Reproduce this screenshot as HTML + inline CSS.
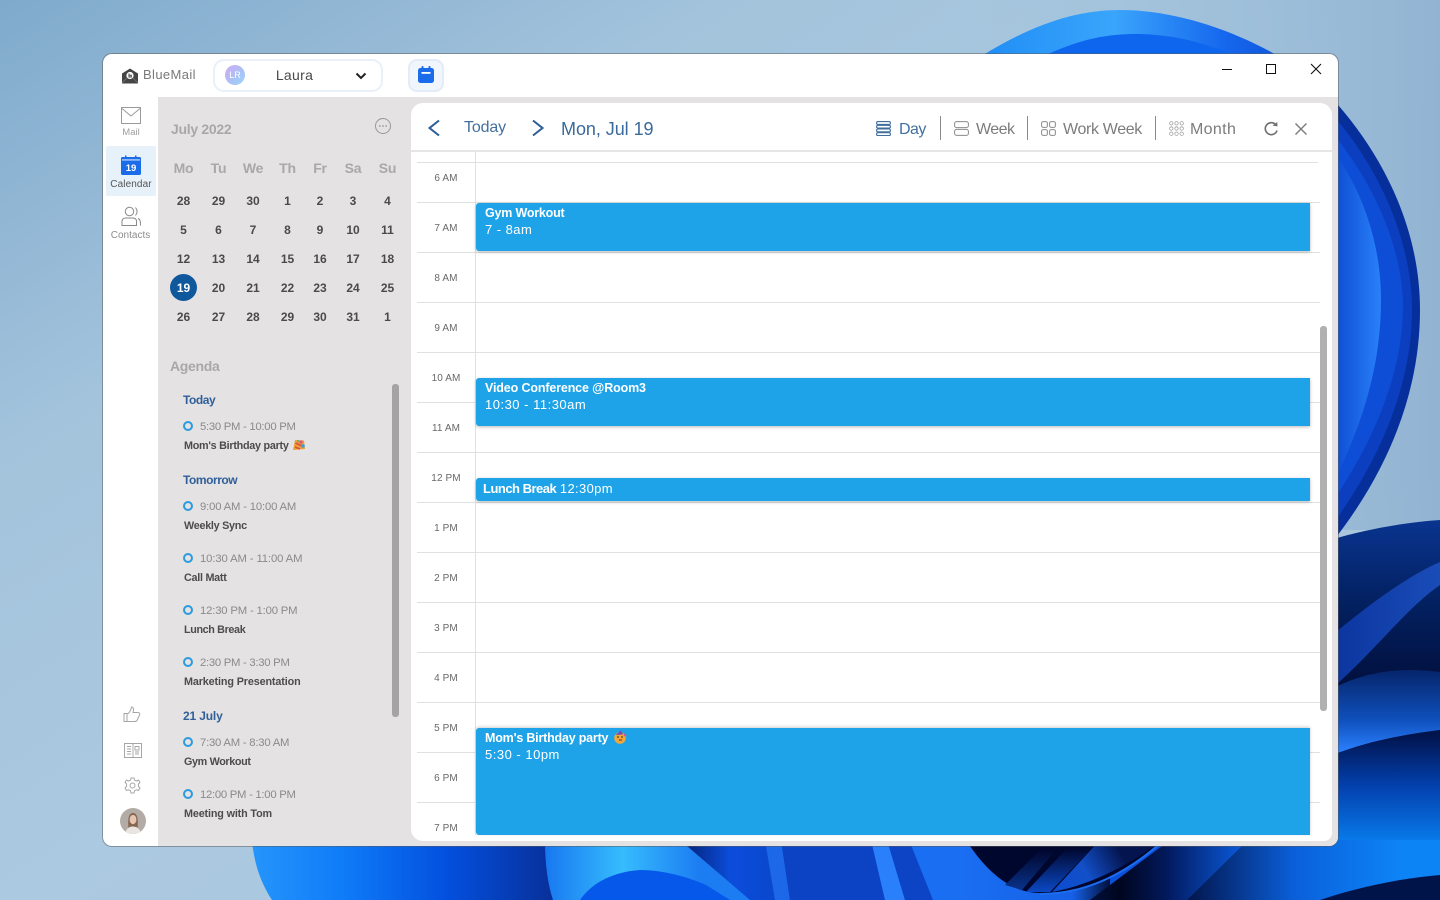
<!DOCTYPE html>
<html><head><meta charset="utf-8"><title>BlueMail Calendar</title>
<style>
html,body{margin:0;padding:0;width:1440px;height:900px;overflow:hidden;background:#a5c4dc;font-family:"Liberation Sans",sans-serif}
svg{position:absolute;display:block}
#win{position:absolute;left:103px;top:54px;width:1235px;height:792px;background:#fff;border-radius:9px;box-shadow:0 0 0 1px rgba(90,90,90,.5);overflow:hidden}
.a{position:absolute;white-space:nowrap;line-height:16px}
.c{position:absolute;white-space:nowrap;line-height:16px;transform:translateX(-50%)}
.hd{font-size:14px;font-weight:bold;color:#a9a7a8;letter-spacing:-.2px}
.dn{font-size:12px;font-weight:bold;color:#4a4a4a}
.gr{font-size:14px;font-weight:bold;color:#a9a7a8;letter-spacing:-.3px}
.ag{font-size:12px;font-weight:bold;color:#2f5f98;letter-spacing:-.45px}
.tm{font-size:11.3px;color:#8a8a8a;letter-spacing:-.22px}
.ti{font-size:10.8px;font-weight:bold;color:#4c4c4c;letter-spacing:-.27px}
.ring{position:absolute;width:6px;height:6px;border:2px solid #2b9be0;border-radius:50%}
.hl{position:absolute;left:417px;width:903px;height:1px;background:#e0e0e0}
.hr{font-size:10px;color:#686868;letter-spacing:.1px}
.ev{position:absolute;left:476px;width:834px;background:#1fa3e8;border-radius:3px 0 0 3px;box-shadow:0 1px 3px rgba(0,0,0,.28)}
.eb{font-size:12.5px;font-weight:bold;color:#fff;letter-spacing:-.2px}
.er{font-size:13px;color:#fff;letter-spacing:.5px}
.tb{font-size:16px;color:#7c7c7c}
.sep{position:absolute;top:116px;width:1px;height:24px;background:#8a8a8a}
.nl{font-size:10px;color:#8d8d8d}
</style></head>
<body>
<svg width="1440" height="900" viewBox="0 0 1440 900" style="left:0;top:0">
<defs>
<linearGradient id="sky" x1="0" y1="0" x2="1" y2="1"><stop offset="0" stop-color="#7faacc"/><stop offset=".25" stop-color="#a3c3dc"/><stop offset=".5" stop-color="#abc9e0"/><stop offset=".75" stop-color="#a9c6de"/><stop offset="1" stop-color="#bad2e5"/></linearGradient>
<linearGradient id="sky2" x1="0" y1="0" x2="1" y2="0"><stop offset=".6" stop-color="#a8c7df" stop-opacity="0"/><stop offset="1" stop-color="#8fb2d1" stop-opacity=".9"/></linearGradient>
<linearGradient id="dome" x1="0" y1="0" x2="1" y2="0"><stop offset="0" stop-color="#1f8cf5"/><stop offset=".45" stop-color="#3aa5fb"/><stop offset=".8" stop-color="#1668ee"/><stop offset="1" stop-color="#0f55dc"/></linearGradient>
<linearGradient id="r4" gradientUnits="userSpaceOnUse" x1="1338" y1="0" x2="1382" y2="0"><stop offset="0" stop-color="#0f50d6"/><stop offset="1" stop-color="#2a82fa"/></linearGradient>
<linearGradient id="dk" gradientUnits="userSpaceOnUse" x1="0" y1="520" x2="0" y2="690"><stop offset="0" stop-color="#09348f"/><stop offset=".5" stop-color="#03205f"/><stop offset="1" stop-color="#010f3c"/></linearGradient>
<linearGradient id="bd" gradientUnits="userSpaceOnUse" x1="1338" y1="0" x2="1440" y2="0"><stop offset="0" stop-color="#0c36a0"/><stop offset="1" stop-color="#1a4cb8"/></linearGradient>
<linearGradient id="lw" gradientUnits="userSpaceOnUse" x1="0" y1="672" x2="0" y2="752"><stop offset="0" stop-color="#06266e"/><stop offset=".6" stop-color="#0f50bc"/><stop offset="1" stop-color="#2b80ff"/></linearGradient>
<linearGradient id="bt" gradientUnits="userSpaceOnUse" x1="0" y1="735" x2="0" y2="880"><stop offset="0" stop-color="#01144e"/><stop offset=".35" stop-color="#0340ad"/><stop offset=".8" stop-color="#0a84f5"/><stop offset="1" stop-color="#0d78ea"/></linearGradient>
<linearGradient id="bl" gradientUnits="userSpaceOnUse" x1="252" y1="0" x2="552" y2="0"><stop offset="0" stop-color="#2595fb"/><stop offset=".3" stop-color="#0f7cf8"/><stop offset=".65" stop-color="#0350de"/><stop offset="1" stop-color="#08309a"/></linearGradient>
<linearGradient id="cy" gradientUnits="userSpaceOnUse" x1="545" y1="0" x2="700" y2="0"><stop offset="0" stop-color="#1878f0"/><stop offset=".5" stop-color="#36bcfd"/><stop offset="1" stop-color="#1c7cf2"/></linearGradient>
<linearGradient id="bm" gradientUnits="userSpaceOnUse" x1="680" y1="0" x2="765" y2="0"><stop offset="0" stop-color="#041f70"/><stop offset=".6" stop-color="#0b4ddb"/><stop offset="1" stop-color="#0a48d0"/></linearGradient>
<linearGradient id="brk" gradientUnits="userSpaceOnUse" x1="1090" y1="0" x2="1240" y2="0"><stop offset="0" stop-color="#02103c"/><stop offset=".2" stop-color="#00061f"/><stop offset=".5" stop-color="#02185a"/><stop offset="1" stop-color="#0a58d8"/></linearGradient>
<linearGradient id="brg" gradientUnits="userSpaceOnUse" x1="1190" y1="0" x2="1400" y2="0"><stop offset="0" stop-color="#03174f"/><stop offset=".5" stop-color="#0a60da"/><stop offset="1" stop-color="#0d84f6"/></linearGradient>
<linearGradient id="rim" gradientUnits="userSpaceOnUse" x1="960" y1="0" x2="1110" y2="0"><stop offset="0" stop-color="#1a6ef2"/><stop offset=".75" stop-color="#1560e6"/><stop offset="1" stop-color="#02103c"/></linearGradient>
<linearGradient id="b1" gradientUnits="userSpaceOnUse" x1="0" y1="850" x2="0" y2="892"><stop offset="0" stop-color="#00072e"/><stop offset="1" stop-color="#0a348f"/></linearGradient>
<linearGradient id="b2" gradientUnits="userSpaceOnUse" x1="0" y1="848" x2="0" y2="892"><stop offset="0" stop-color="#00072e"/><stop offset="1" stop-color="#0b48c4"/></linearGradient>
<linearGradient id="b3" gradientUnits="userSpaceOnUse" x1="1050" y1="890" x2="1120" y2="850"><stop offset="0" stop-color="#0b4cd0"/><stop offset=".5" stop-color="#124fc8"/><stop offset="1" stop-color="#04144e"/></linearGradient>
</defs>
<rect width="1440" height="900" fill="url(#sky)"/>
<rect width="1440" height="530" fill="url(#sky2)"/>
<!-- top dome -->
<path d="M975 60 C1030 25 1075 10 1120 10 C1175 10 1235 30 1285 60 L1285 120 L975 120Z" fill="url(#dome)"/>
<path d="M1040 58 C1080 38 1110 34 1135 34 C1170 34 1205 42 1240 58Z" fill="#0f66ee"/>
<!-- right petal -->
<path d="M1330 96 C1380 150 1420 225 1420 310 C1420 390 1390 470 1330 545Z" fill="#072f9c"/>
<path d="M1330 112 C1378 165 1412 240 1412 310 C1412 385 1380 460 1330 528Z" fill="#0b3fc0"/>
<path d="M1330 130 C1372 180 1402 245 1403 305 C1403 375 1372 445 1330 505Z" fill="#0e4ed6"/>
<path d="M1330 147 C1360 185 1381 240 1381 300 C1381 370 1360 430 1330 490Z" fill="url(#r4)"/>
<!-- lower right wave -->
<path d="M1330 540 C1370 528 1410 522 1440 520 L1440 900 L1330 900Z" fill="url(#dk)"/>
<path d="M1336 632 C1375 600 1410 575 1440 562 L1440 585 C1410 605 1375 650 1336 685Z" fill="url(#bd)"/>
<path d="M1330 690 C1370 668 1410 668 1440 672 L1440 730 C1400 735 1365 742 1330 756Z" fill="url(#lw)"/>
<path d="M1330 756 C1365 743 1400 735 1440 730 L1440 900 L1330 900Z" fill="url(#bt)"/>
<!-- bottom band -->
<rect x="540" y="840" width="900" height="60" fill="#0b50d8"/>
<path d="M252 840 C254 865 262 885 272 900 L560 900 L560 840Z" fill="url(#bl)"/>
<path d="M545 840 C545 865 548 885 553 900 L760 900 L690 840Z" fill="url(#cy)"/>
<path d="M580 900 C590 885 610 872 640 870 C665 870 690 878 706 885 L730 900Z" fill="#0658ea"/>
<path d="M680 840 L850 840 L850 900 L750 900Z" fill="url(#bm)"/>
<path d="M765 840 L781 840 L790 900 L775 900Z" fill="#1c68e8"/>
<path d="M781 840 L871 840 L885 900 L790 900Z" fill="#0b43c4"/>
<path d="M871 840 L887 840 L905 900 L885 900Z" fill="#2a80fa"/>
<path d="M887 840 L911 840 L933 900 L905 900Z" fill="#0d44c6"/>
<path d="M909 840 L945 840 C965 860 985 885 1010 900 L933 900Z" fill="#1a6ef2"/>
<rect x="945" y="840" width="165" height="60" fill="url(#rim)"/>
<path d="M1090 900 L1170 840 L1252 840 L1187 900Z" fill="url(#brk)"/>
<path d="M1187 900 L1248 840 L1440 840 L1440 900Z" fill="url(#brg)"/>
<path d="M966 840 C985 870 1010 893 1040 893 C1090 893 1130 870 1162 840Z" fill="#00072e"/>
<path d="M1005 885 L1045 845 L1060 845 L1022 890Z" fill="url(#b1)"/>
<path d="M1026 892 L1070 845 L1095 845 L1050 892Z" fill="url(#b2)"/>
<path d="M1052 892 C1090 885 1130 865 1162 840 L1100 840Z" fill="url(#b3)"/>
<path d="M1040 894 C1090 894 1130 870 1162 842" fill="none" stroke="#1c6cf0" stroke-width="2"/>
<path d="M1320 900 C1365 885 1405 878 1440 875 L1440 900Z" fill="#01144a"/>
</svg>

<div id="win"></div>
<!-- gray panel -->
<div style="position:absolute;left:158px;top:97px;width:1180px;height:749px;background:#e4e2e3;border-radius:0 0 9px 0"></div>
<!-- main white panel -->
<div style="position:absolute;left:411px;top:103px;width:921px;height:738px;background:#fff;border-radius:12px 12px 8px 12px"></div>

<!-- header -->
<svg width="18" height="16" viewBox="0 0 18 16" style="left:121px;top:68px"><path d="M1 5.5 L9 .5 L17 5.5 V15.5 H1Z" fill="#454545"/><circle cx="9" cy="7.5" r="3.6" fill="#fff"/><path d="M8 5.5 V9 H10.3 V7.2 H8" fill="none" stroke="#454545" stroke-width="1"/><path d="M1 15 L6 10 M17 15 L12 10" stroke="#777" stroke-width=".8"/></svg>
<span class="a" style="left:143px;top:67px;font-size:13px;color:#797979;letter-spacing:.38px">BlueMail</span>
<div style="position:absolute;left:213px;top:59px;width:166px;height:29px;border:2px solid #e9f0fa;border-radius:11px;background:#fff"></div>
<div style="position:absolute;left:225px;top:65px;width:20px;height:20px;border-radius:50%;background:linear-gradient(135deg,#d3a8f2,#a7c4f8 60%,#9fd4f8);color:#fff;font-size:9px;line-height:20px;text-align:center">LR</div>
<span class="c" style="left:294.5px;top:67px;font-size:14px;color:#4a4a4a;letter-spacing:.3px">Laura</span>
<svg width="12" height="8" viewBox="0 0 12 8" style="left:355px;top:72px"><path d="M1.5 1.5 L6 6 L10.5 1.5" fill="none" stroke="#222" stroke-width="2"/></svg>
<div style="position:absolute;left:408px;top:59px;width:32px;height:29px;border:2px solid #e4ecf8;border-radius:9px;background:#f1f5fc"></div>
<svg width="16" height="17" viewBox="0 0 16 17" style="left:418px;top:66px"><rect x="0" y="2" width="16" height="15" rx="2.5" fill="#1b6cea"/><rect x="3.5" y="0" width="2" height="4" rx="1" fill="#1b6cea"/><rect x="10.5" y="0" width="2" height="4" rx="1" fill="#1b6cea"/><rect x="3.5" y="6" width="9" height="1.8" fill="#fff"/></svg>
<!-- window controls -->
<div style="position:absolute;left:1222px;top:69px;width:10px;height:1px;background:#111"></div>
<div style="position:absolute;left:1266px;top:64px;width:8px;height:8px;border:1px solid #111;background:#fff"></div>
<svg width="12" height="12" viewBox="0 0 12 12" style="left:1310px;top:63px"><path d="M1 1 L11 11 M11 1 L1 11" stroke="#111" stroke-width="1.1"/></svg>

<!-- left nav -->
<svg width="20" height="17" viewBox="0 0 20 17" style="left:121px;top:107px"><rect x=".5" y=".5" width="19" height="16" fill="none" stroke="#9a9a9a"/><path d="M1 1.5 L10 9 L19 1.5" fill="none" stroke="#9a9a9a"/></svg>
<span class="c nl" style="left:131px;top:125px;font-size:9.5px;color:#a0a0a0">Mail</span>
<div style="position:absolute;left:106px;top:146px;width:50px;height:50px;background:#e7f1fa;border-radius:2px"></div>
<svg width="20" height="20" viewBox="0 0 20 20" style="left:121px;top:155px"><rect x="0" y="2" width="20" height="18" rx="1.5" fill="#1a6ce8"/><rect x="1" y="4.5" width="18" height=".9" fill="#fff"/><rect x="4" y="0.5" width="1.5" height="3" fill="#1a6ce8"/><rect x="14" y="0.5" width="1.5" height="3" fill="#1a6ce8"/><text x="10" y="16" font-family="Liberation Sans,sans-serif" font-size="9.5" font-weight="bold" fill="#fff" text-anchor="middle">19</text></svg>
<span class="c nl" style="left:131px;top:177px;color:#555;letter-spacing:.1px">Calendar</span>
<svg width="22" height="21" viewBox="0 0 22 21" style="left:120px;top:206px"><circle cx="9.5" cy="5.5" r="4.2" fill="none" stroke="#8a8a8a"/><path d="M15.5 1.5 C17.5 4 17.5 7 15.5 9.5" fill="none" stroke="#8a8a8a"/><path d="M2 19.5 V15.5 C2 13 4 12 6 12 H13 C15 12 16.5 13 16.5 15.5 V19.5Z" fill="none" stroke="#8a8a8a"/><path d="M18 12.5 C20 13 20.5 15 20.5 19.5" fill="none" stroke="#8a8a8a"/></svg>
<span class="c nl" style="left:130.5px;top:228px">Contacts</span>
<svg width="18" height="17" viewBox="0 0 18 17" style="left:123px;top:706px"><path d="M1 7.5 H4 V15.5 H1Z M4 8 C6 7.5 8 4.5 8.5 1 C10.5 1 11 3.5 10 6.5 H15 C16.5 6.5 17 8 16.5 9 L14 14.5 C13.5 15.5 12.5 15.5 11.5 15.5 H4" fill="none" stroke="#a6a6a6"/></svg>
<svg width="18" height="15" viewBox="0 0 18 15" style="left:124px;top:743px"><rect x=".5" y=".5" width="17" height="14" fill="none" stroke="#a6a6a6"/><path d="M9 .5 V14.5 M3 3.5 H7 M3 6 H7 M3 8.5 H7 M3 11 H7 M11 3.5 H15 V7 H11Z M11 9 H15 M11 11 H15" fill="none" stroke="#a6a6a6" stroke-width=".9"/></svg>
<svg width="17" height="17" viewBox="0 0 17 17" style="left:123.5px;top:777px"><path d="M7 1 H10 L10.5 3.2 L12.5 4 L14.5 3 L16 5.5 L14.4 7 V9.4 L16 11 L14.5 13.5 L12.5 12.8 L10.5 13.7 L10 16 H7 L6.5 13.7 L4.5 12.8 L2.5 13.5 L1 11 L2.6 9.4 V7 L1 5.5 L2.5 3 L4.5 4 L6.5 3.2Z" fill="none" stroke="#a6a6a6" stroke-linejoin="round"/><circle cx="8.5" cy="8.5" r="2.5" fill="none" stroke="#a6a6a6"/></svg>
<svg width="26" height="26" viewBox="0 0 26 26" style="left:120px;top:808px"><defs><clipPath id="av"><circle cx="13" cy="13" r="13"/></clipPath></defs><g clip-path="url(#av)"><rect width="26" height="26" fill="#b3aca6"/><path d="M8.5 21 C7.5 10 9 5 13 5 C17 5 18.5 10 17.5 21Z" fill="#856650"/><ellipse cx="13" cy="11.5" rx="3.4" ry="4.6" fill="#e6c6b2"/><path d="M5 26 C6 20 10 18.5 13 18.5 C16 18.5 20 20 21 26Z" fill="#e9e6e2"/></g></svg>

<!-- calendar -->
<span class="a gr" style="left:171px;top:121px">July 2022</span>
<svg width="18" height="18" viewBox="0 0 18 18" style="left:374px;top:117px"><circle cx="9" cy="9" r="7.5" fill="none" stroke="#9a9a9a"/><circle cx="5.8" cy="9" r=".9" fill="#9a9a9a"/><circle cx="9" cy="9" r=".9" fill="#9a9a9a"/><circle cx="12.2" cy="9" r=".9" fill="#9a9a9a"/></svg>
<span class="c hd" style="left:183.5px;top:160px">Mo</span><span class="c hd" style="left:218.5px;top:160px">Tu</span><span class="c hd" style="left:253px;top:160px">We</span><span class="c hd" style="left:287.5px;top:160px">Th</span><span class="c hd" style="left:320px;top:160px">Fr</span><span class="c hd" style="left:353px;top:160px">Sa</span><span class="c hd" style="left:387.5px;top:160px">Su</span>

<span class="c dn" style="left:183.5px;top:193px">28</span><span class="c dn" style="left:218.5px;top:193px">29</span><span class="c dn" style="left:253px;top:193px">30</span><span class="c dn" style="left:287.5px;top:193px">1</span><span class="c dn" style="left:320px;top:193px">2</span><span class="c dn" style="left:353px;top:193px">3</span><span class="c dn" style="left:387.5px;top:193px">4</span>
<span class="c dn" style="left:183.5px;top:222px">5</span><span class="c dn" style="left:218.5px;top:222px">6</span><span class="c dn" style="left:253px;top:222px">7</span><span class="c dn" style="left:287.5px;top:222px">8</span><span class="c dn" style="left:320px;top:222px">9</span><span class="c dn" style="left:353px;top:222px">10</span><span class="c dn" style="left:387.5px;top:222px">11</span>
<span class="c dn" style="left:183.5px;top:251px">12</span><span class="c dn" style="left:218.5px;top:251px">13</span><span class="c dn" style="left:253px;top:251px">14</span><span class="c dn" style="left:287.5px;top:251px">15</span><span class="c dn" style="left:320px;top:251px">16</span><span class="c dn" style="left:353px;top:251px">17</span><span class="c dn" style="left:387.5px;top:251px">18</span>
<div style="position:absolute;left:170px;top:274px;width:27px;height:27px;border-radius:50%;background:#10589c"></div>
<span class="c dn" style="left:183.5px;top:280px;color:#fff">19</span><span class="c dn" style="left:218.5px;top:280px">20</span><span class="c dn" style="left:253px;top:280px">21</span><span class="c dn" style="left:287.5px;top:280px">22</span><span class="c dn" style="left:320px;top:280px">23</span><span class="c dn" style="left:353px;top:280px">24</span><span class="c dn" style="left:387.5px;top:280px">25</span>
<span class="c dn" style="left:183.5px;top:309px">26</span><span class="c dn" style="left:218.5px;top:309px">27</span><span class="c dn" style="left:253px;top:309px">28</span><span class="c dn" style="left:287.5px;top:309px">29</span><span class="c dn" style="left:320px;top:309px">30</span><span class="c dn" style="left:353px;top:309px">31</span><span class="c dn" style="left:387.5px;top:309px">1</span>

<!-- agenda -->
<span class="a gr" style="left:170px;top:358px">Agenda</span>
<div style="position:absolute;left:392px;top:384px;width:7px;height:333px;background:#a5a3a4;border-radius:3px"></div>

<span class="a ag" style="left:183px;top:392px">Today</span>
<div class="ring" style="left:183px;top:421px"></div><span class="a tm" style="left:200px;top:419px;letter-spacing:-.27px">5:30 PM - 10:00 PM</span>
<span class="a ti" style="left:184px;top:438px">Mom's Birthday party</span>
<svg width="12" height="12" viewBox="0 0 12 12" style="left:293px;top:439px"><path d="M0 11 L2 1 L11 1.5 L12 10Z" fill="#f0a030"/><path d="M2 8 L7 10 M2.5 4 L9 7" stroke="#d8504a" stroke-width="1.6"/><circle cx="8" cy="3" r="1.6" fill="#e0508a"/><circle cx="10" cy="7" r="1.8" fill="#38a0d8"/><circle cx="5" cy="2" r="1" fill="#48b070"/></svg>

<span class="a ag" style="left:183px;top:472px">Tomorrow</span>
<div class="ring" style="left:183px;top:501px"></div><span class="a tm" style="left:200px;top:499px;letter-spacing:-.17px">9:00 AM - 10:00 AM</span>
<span class="a ti" style="left:184px;top:518px">Weekly Sync</span>
<div class="ring" style="left:183px;top:553px"></div><span class="a tm" style="left:200px;top:551px;letter-spacing:-.12px">10:30 AM - 11:00 AM</span>
<span class="a ti" style="left:184px;top:570px">Call Matt</span>
<div class="ring" style="left:183px;top:605px"></div><span class="a tm" style="left:200px;top:603px;letter-spacing:-.17px">12:30 PM - 1:00 PM</span>
<span class="a ti" style="left:184px;top:622px;letter-spacing:-.37px">Lunch Break</span>
<div class="ring" style="left:183px;top:657px"></div><span class="a tm" style="left:200px;top:655px;letter-spacing:-.27px">2:30 PM - 3:30 PM</span>
<span class="a ti" style="left:184px;top:674px;letter-spacing:-.13px">Marketing Presentation</span>

<span class="a ag" style="left:183px;top:708px;letter-spacing:-.15px">21 July</span>
<div class="ring" style="left:183px;top:737px"></div><span class="a tm" style="left:200px;top:735px">7:30 AM - 8:30 AM</span>
<span class="a ti" style="left:184px;top:754px;letter-spacing:-.36px">Gym Workout</span>
<div class="ring" style="left:183px;top:789px"></div><span class="a tm" style="left:200px;top:787px;letter-spacing:-.27px">12:00 PM - 1:00 PM</span>
<span class="a ti" style="left:184px;top:806px;letter-spacing:-.15px">Meeting with Tom</span>

<!-- toolbar -->
<svg width="14" height="18" viewBox="0 0 14 18" style="left:427px;top:119px"><path d="M12 1.5 L2.5 9 L12 16.5" fill="none" stroke="#2b5d96" stroke-width="2"/></svg>
<span class="a" style="left:464px;top:120px;font-size:16px;color:#44709e;letter-spacing:-.15px">Today</span>
<svg width="14" height="18" viewBox="0 0 14 18" style="left:531px;top:119px"><path d="M2 1.5 L11.5 9 L2 16.5" fill="none" stroke="#2b5d96" stroke-width="2"/></svg>
<span class="a" style="left:561px;top:121px;font-size:18px;color:#3a6a9c;letter-spacing:-.05px">Mon, Jul 19</span>
<svg width="15" height="15" viewBox="0 0 15 15" style="left:875.5px;top:121px"><g fill="none" stroke="#3f6d9c" stroke-width="1.1"><rect x=".6" y=".6" width="13.8" height="2.8" rx="1.3"/><rect x=".6" y="4.3" width="13.8" height="2.8" rx="1.3"/><rect x=".6" y="8" width="13.8" height="2.8" rx="1.3"/><rect x=".6" y="11.7" width="13.8" height="2.8" rx="1.3"/></g></svg>
<span class="a tb" style="left:899px;top:122px;color:#44709e;letter-spacing:-.55px">Day</span>
<div class="sep" style="left:940px"></div>
<svg width="15" height="15" viewBox="0 0 15 15" style="left:953.5px;top:121px"><g fill="none" stroke="#8a8a8a" stroke-width="1"><rect x=".6" y=".6" width="13.8" height="6" rx="2"/><rect x=".6" y="8.4" width="13.8" height="6" rx="2"/></g></svg>
<span class="a tb" style="left:976px;top:122px;letter-spacing:-.55px">Week</span>
<div class="sep" style="left:1027px"></div>
<svg width="15" height="15" viewBox="0 0 15 15" style="left:1040.5px;top:121px"><g fill="none" stroke="#8a8a8a" stroke-width="1"><rect x=".6" y=".6" width="5.8" height="5.8" rx="1.6"/><rect x="8.6" y=".6" width="5.8" height="5.8" rx="1.6"/><rect x=".6" y="8.6" width="5.8" height="5.8" rx="1.6"/><rect x="8.6" y="8.6" width="5.8" height="5.8" rx="1.6"/></g></svg>
<span class="a tb" style="left:1063px;top:122px;letter-spacing:-.35px">Work Week</span>
<div class="sep" style="left:1155px"></div>
<svg width="15" height="15" viewBox="0 0 15 15" style="left:1168.5px;top:121px"><g fill="none" stroke="#a0a0a0" stroke-width=".8"><circle cx="2.3" cy="2.3" r="1.7"/><circle cx="7.5" cy="2.3" r="1.7"/><circle cx="12.7" cy="2.3" r="1.7"/><circle cx="2.3" cy="7.5" r="1.7"/><circle cx="7.5" cy="7.5" r="1.7"/><circle cx="12.7" cy="7.5" r="1.7"/><circle cx="2.3" cy="12.7" r="1.7"/><circle cx="7.5" cy="12.7" r="1.7"/><circle cx="12.7" cy="12.7" r="1.7"/></g></svg>
<span class="a tb" style="left:1190px;top:122px;letter-spacing:.35px">Month</span>
<svg width="16" height="16" viewBox="0 0 16 16" style="left:1263px;top:121px"><path d="M13.2 4.2 A6 6 0 1 0 14 9.5" fill="none" stroke="#6f6f6f" stroke-width="1.6"/><path d="M9.5 4.6 L14.5 5.4 L14.2 1Z" fill="#6f6f6f"/></svg>
<svg width="14" height="14" viewBox="0 0 14 14" style="left:1294px;top:122px"><path d="M1.5 1.5 L12.5 12.5 M12.5 1.5 L1.5 12.5" stroke="#7a7a7a" stroke-width="1.4"/></svg>
<div style="position:absolute;left:411px;top:150px;width:921px;height:2px;background:#e6e6e6"></div>

<!-- grid -->
<div style="position:absolute;left:475px;top:152px;width:1px;height:683px;background:#e0e0e0"></div>
<div class="hl" style="top:162px;width:901px"></div><div class="hl" style="top:202px"></div><div class="hl" style="top:252px"></div><div class="hl" style="top:302px"></div><div class="hl" style="top:352px"></div><div class="hl" style="top:402px"></div><div class="hl" style="top:452px"></div><div class="hl" style="top:502px"></div><div class="hl" style="top:552px"></div><div class="hl" style="top:602px"></div><div class="hl" style="top:652px"></div><div class="hl" style="top:702px"></div><div class="hl" style="top:752px"></div><div class="hl" style="top:802px"></div>
<span class="c hr" style="left:446px;top:171px">6 AM</span><span class="c hr" style="left:446px;top:221px">7 AM</span><span class="c hr" style="left:446px;top:271px">8 AM</span><span class="c hr" style="left:446px;top:321px">9 AM</span><span class="c hr" style="left:446px;top:371px">10 AM</span><span class="c hr" style="left:446px;top:421px">11 AM</span><span class="c hr" style="left:446px;top:471px">12 PM</span><span class="c hr" style="left:446px;top:521px">1 PM</span><span class="c hr" style="left:446px;top:571px">2 PM</span><span class="c hr" style="left:446px;top:621px">3 PM</span><span class="c hr" style="left:446px;top:671px">4 PM</span><span class="c hr" style="left:446px;top:721px">5 PM</span><span class="c hr" style="left:446px;top:771px">6 PM</span><span class="c hr" style="left:446px;top:821px">7 PM</span>

<!-- events -->
<div class="ev" style="top:203px;height:48px"></div>
<span class="a eb" style="left:485px;top:205px">Gym Workout</span><span class="a er" style="left:485px;top:222px;letter-spacing:.45px">7 - 8am</span>
<div class="ev" style="top:378px;height:48px"></div>
<span class="a eb" style="left:485px;top:380px;letter-spacing:-.14px">Video Conference @Room3</span><span class="a er" style="left:485px;top:397px">10:30 - 11:30am</span>
<div class="ev" style="top:478px;height:23px"></div>
<span class="a" style="left:483px;top:481px;font-size:13px;color:#fff"><b style="letter-spacing:-.5px">Lunch Break</b> <span style="letter-spacing:.35px">12:30pm</span></span>
<div class="ev" style="top:728px;height:107px;box-shadow:0 -1px 3px rgba(0,0,0,.2)"></div>
<span class="a eb" style="left:485px;top:730px">Mom's Birthday party</span>
<svg width="14" height="14" viewBox="0 0 14 14" style="left:613px;top:730px"><circle cx="7" cy="8" r="5.8" fill="#f0a83a"/><path d="M2.5 5 L8 0.5 L10 4.5Z" fill="#7a4ab0"/><circle cx="5" cy="7" r=".9" fill="#5a3a20"/><circle cx="9" cy="7" r=".9" fill="#5a3a20"/><path d="M6 10 L9 10" stroke="#a03020" stroke-width="1.2"/><circle cx="12" cy="5" r="1.3" fill="#e0508a"/></svg>
<span class="a er" style="left:485px;top:747px">5:30 - 10pm</span>

<div style="position:absolute;left:1320px;top:326px;width:7px;height:385px;background:#b0b0b0;border-radius:3px"></div>
</body></html>
